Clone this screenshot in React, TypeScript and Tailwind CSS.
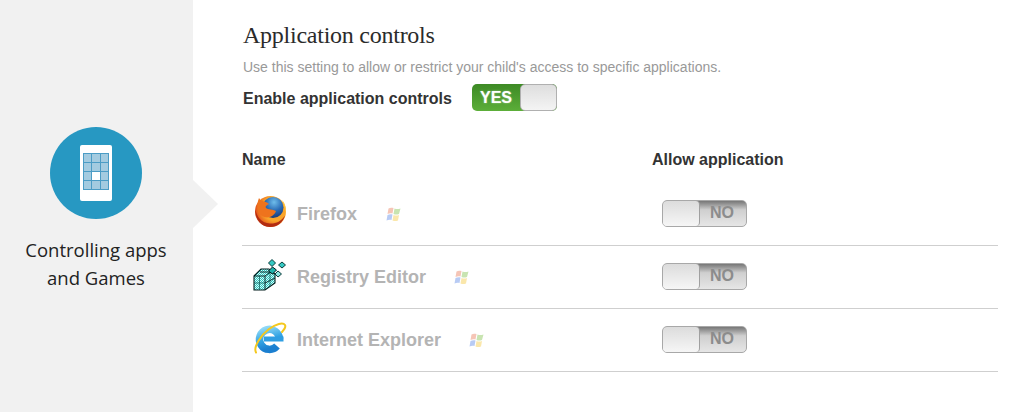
import React from 'react';

const apps = [
  { name: 'Firefox', icon: <FirefoxIcon />, gap: 'ml-[29px]' },
  { name: 'Registry Editor', icon: <RegistryIcon />, gap: 'ml-[28px]' },
  { name: 'Internet Explorer', icon: <IeIcon />, gap: 'ml-[28px]' },
];

function FirefoxIcon() {
  return (
    <svg width="34" height="34" viewBox="0 0 34 34">
      <defs>
        <radialGradient id="ffFox" cx="0.65" cy="0.4" r="0.8">
          <stop offset="0.5" stopColor="#f9a52a" />
          <stop offset="0.78" stopColor="#e4551a" />
          <stop offset="1" stopColor="#a3210f" />
        </radialGradient>
        <radialGradient id="ffGlobe" cx="0.55" cy="0.25" r="0.8">
          <stop offset="0" stopColor="#6fbdea" />
          <stop offset="0.5" stopColor="#2a6cb6" />
          <stop offset="1" stopColor="#15336f" />
        </radialGradient>
      </defs>
      <circle cx="17.500" cy="16.500" r="15.500" fill="url(#ffFox)" />
      <circle cx="20" cy="12.500" r="10.500" fill="url(#ffGlobe)" />
      <path d="M6 3c2 4 7 3 10 6-2 1-4 2-3 4 2 2 7 1 10 3-2 6-9 8-14 5C4 18 3 10 6 3z" fill="#ee731d" />
      <path d="M2.500 14c1 8 6 14 14.500 14.500 6 .3 11-2 15-8-2 7-8 11.500-15 11.500C8 32 1.500 23 2.500 14z" fill="#b22c12" />
      <path d="M29 5c3 3 4.500 8 3.500 13-.8-5-1.500-9-3.500-13z" fill="#fcc640" />
    </svg>
  );
}

function RegistryIcon() {
  return (
    <svg width="34" height="34" viewBox="0 0 34 34">
      <defs>
        <pattern id="regDots" width="2" height="2" patternUnits="userSpaceOnUse">
          <rect width="2" height="2" fill="#2cc4be" />
          <rect width="1" height="1" fill="#d6fbf8" />
          <rect x="1" y="1" width="1" height="1" fill="#d6fbf8" />
        </pattern>
      </defs>
      <path d="M1 18l7-7h8l6 5v9l-10 7H1z" fill="url(#regDots)" stroke="#021c1c" strokeWidth="1.100" />
      <path d="M1 18h11v14M12 18l10-7M12 25l10-5M7 14h9l5 2" fill="none" stroke="#021c1c" strokeWidth="0.900" />
      <path d="M1 25h11M6.500 18v14M17 15v13" fill="none" stroke="#0a5a58" strokeWidth="0.700" />
      <path d="M15.500 13l4-4 4 3-4 4z" fill="#1fb3ad" stroke="#021c1c" />
      <path d="M15.500 5l3.500-3.500 3.500 3.500-3.500 3.500z" fill="#35c9c3" stroke="#0b3d3c" />
      <path d="M25.500 7l3.500-3 3.500 3-3.500 3z" fill="#35c9c3" stroke="#0b3d3c" />
      <path d="M22 16l3-3 3.500 3-3.500 3z" fill="#8fe6e2" stroke="#0b3d3c" />
    </svg>
  );
}

function IeIcon() {
  return (
    <svg width="34" height="34" viewBox="0 0 34 34">
      <defs>
        <linearGradient id="ieBlue" x1="0" y1="0" x2="0.3" y2="1">
          <stop offset="0" stopColor="#8fd8f6" />
          <stop offset="0.55" stopColor="#35a5e4" />
          <stop offset="1" stopColor="#1b7fd0" />
        </linearGradient>
      </defs>
      <path d="M26.500 18A10 10 0 1 0 24 25" fill="none" stroke="url(#ieBlue)" strokeWidth="7.500" />
      <path d="M11 15.500h19.500V20.500H11z" fill="#2f9ee2" />
      <path d="M3 31.500C0 26 8 14 16 8 23 3 30 1 32 4c1 2-1 5-3 7" fill="none" stroke="#f4c81e" strokeWidth="2" strokeLinecap="round" />
    </svg>
  );
}

function WindowsIcon() {
  return (
    <svg width="16" height="16" viewBox="0 0 16 16" className="opacity-40 blur-[0.5px]">
      <path d="M2.500 2.500C4 1.500 5.500 1.500 7.500 2l-1 5.500C5 7 3.500 7 1.500 8z" fill="#e8704a" />
      <path d="M8.500 2.500c2 .8 3.500 .8 6 0L13 8c-2 .8-3.500 .8-5.500 0z" fill="#78bd3f" />
      <path d="M1.500 9c2-1 3.500-1 5-.5l-1 5.500c-1.500-.5-3-.5-5 .5z" fill="#4f7fe6" />
      <path d="M7.500 9c2 .8 3.500 .8 5.500 0l-1 5.500c-2 .8-3.500 .8-5.500 0z" fill="#f4c430" />
    </svg>
  );
}

function PhoneGraphic() {
  const cells = Array.from({ length: 12 }, (_, i) => i);
  return (
    <div className="flex h-[56px] w-[32px] flex-col rounded-[2px] bg-white px-[3px] pt-[8px]">
      <div className="grid h-[37px] w-[26px] grid-cols-3 grid-rows-4 gap-px bg-[#4b9cc5] p-px">
        {cells.map((i) => (
          <div key={i} className={i === 7 ? 'bg-white' : 'bg-[#a3cbe0]'} />
        ))}
      </div>
    </div>
  );
}

function NoToggle() {
  return (
    <div className="mb-[2px] flex h-[27px] w-[85px] overflow-hidden rounded-[5px] border border-[#a8a8a8] bg-gradient-to-b from-[#777] via-[#cfcfcf] via-35% to-[#e6e6e6]">
      <div className="h-full w-[37px] rounded-r-[4px] border-r border-[#a0a0a0] bg-gradient-to-b from-[#dcdcdc] to-[#f6f6f6]" />
      <div className="flex flex-1 items-center justify-center pr-[2px] text-[16px] font-bold text-[#8c8c8c]">NO</div>
    </div>
  );
}

export default function App() {
  return (
    <div className="flex h-[412px] w-[1028px] overflow-hidden bg-white font-['Liberation_Sans',sans-serif]">
      <aside className="relative flex w-[193px] shrink-0 flex-col items-center bg-[#f1f1f1] pr-px pt-[127px]">
        <div className="flex h-[92px] w-[92px] items-center justify-center rounded-full bg-[#2798c2]">
          <PhoneGraphic />
        </div>
        <p className="mt-[17px] text-center font-['Open_Sans',sans-serif] text-[18.500px] leading-[28px] text-[#222]">
          Controlling apps<br />and Games
        </p>
        <div className="absolute left-[193px] top-[180px] h-0 w-0 border-y-[24px] border-l-[25px] border-y-transparent border-l-[#f1f1f1]" />
      </aside>

      <main className="w-[756px] pl-[49px] pt-[20px]" style={{ boxSizing: 'content-box' }}>
        <h1 className="ml-px font-['Liberation_Serif',serif] text-[24px] leading-[30px] tracking-[-0.25px] text-[#2b2b2b]">Application controls</h1>
        <p className="ml-px mt-[8px] text-[14px] leading-[18px] text-[#999]">
          Use this setting to allow or restrict your child's access to specific applications.
        </p>
        <div className="ml-px mt-[8px] flex items-center">
          <span className="w-[229px] pt-[2px] text-[16px] font-bold text-[#333]">Enable application controls</span>
          <div className="flex h-[27px] w-[85px] rounded-[5px] bg-gradient-to-b from-[#3d8a25] to-[#5cae39]">
            <div className="flex w-[48px] items-center justify-center text-[16px] font-bold text-white [text-shadow:0_0_2px_#ffffff88]">YES</div>
            <div className="flex-1 rounded-[5px] border border-[#b0b0b0] bg-gradient-to-b from-[#dedede] to-[#f4f4f4]" />
          </div>
        </div>

        <div className="mt-[39px] flex text-[16px] font-bold leading-[20px] text-[#333]">
          <span className="w-[410px]">Name</span>
          <span>Allow application</span>
        </div>

        <div className="mt-[13px]">
          {apps.map((app) => (
            <div key={app.name} className="flex h-[63px] items-center border-b border-[#cfcfcf]">
              <div className="flex w-[420px] items-center pl-[11px]">
                <div className="mb-[5px] h-[34px] w-[34px]">{app.icon}</div>
                <span className="ml-[10px] text-[18px] font-bold text-[#b4b4b4]">{app.name}</span>
                <span className={app.gap}><WindowsIcon /></span>
              </div>
              <NoToggle />
            </div>
          ))}
        </div>
      </main>
    </div>
  );
}
